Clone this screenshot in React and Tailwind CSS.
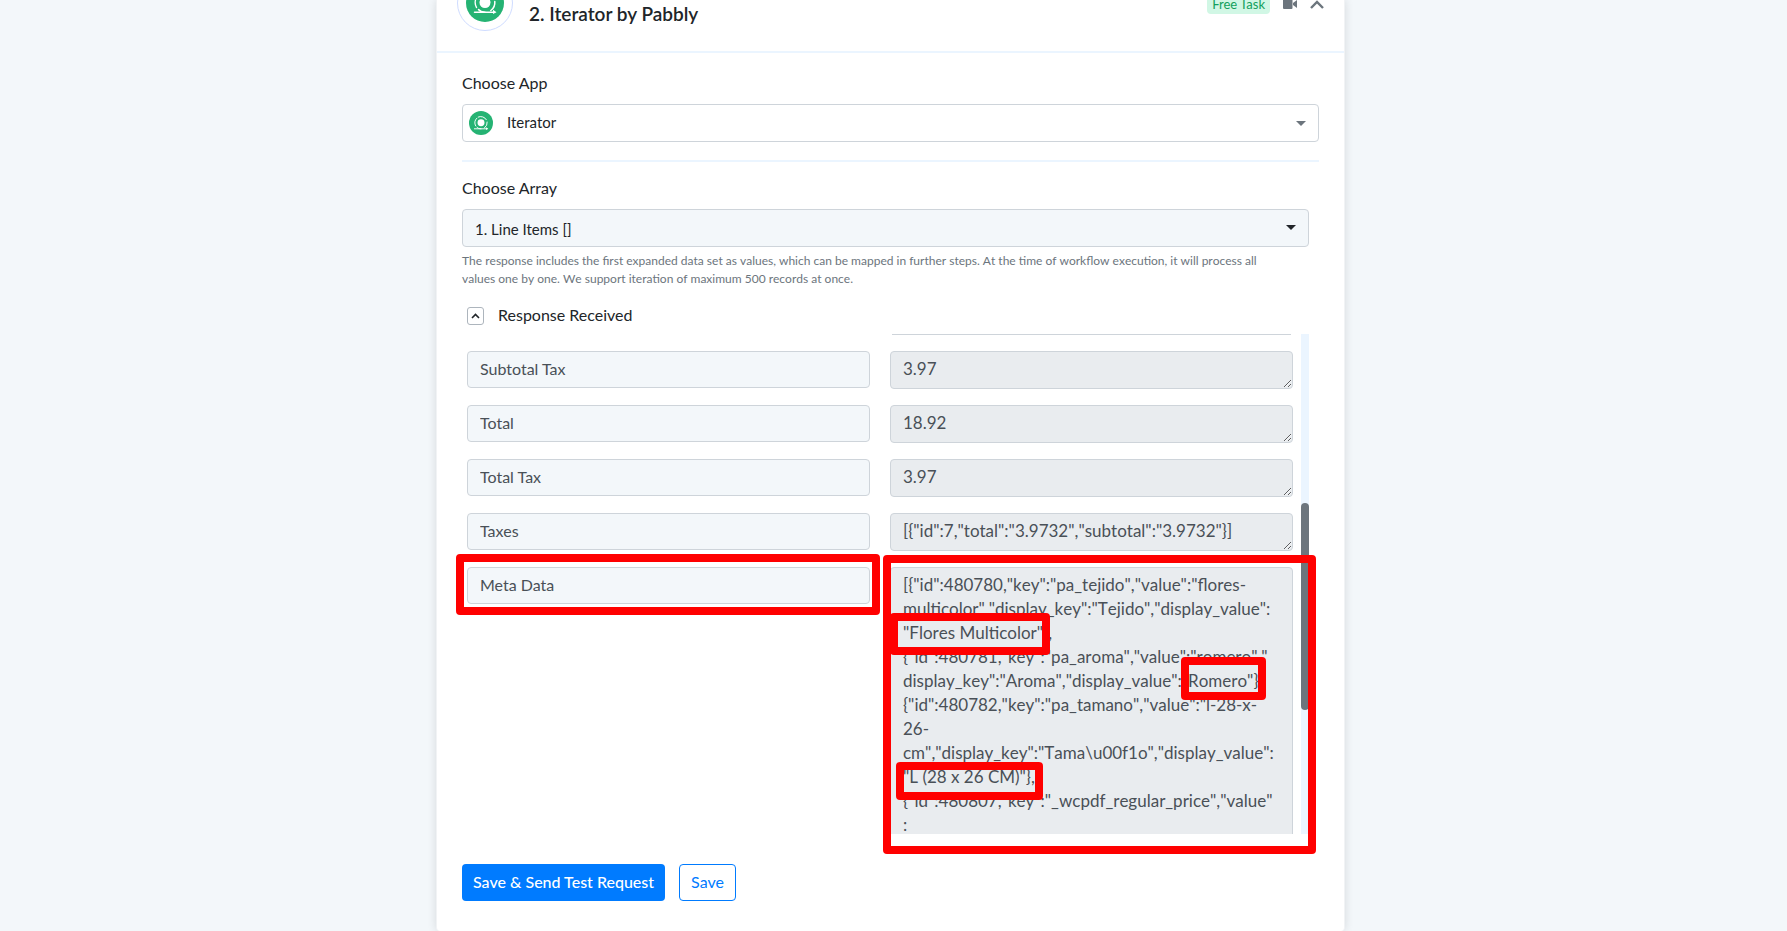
import { useState } from "react";

const fields = [
  { label: "Subtotal Tax", value: "3.97" },
  { label: "Total", value: "18.92" },
  { label: "Total Tax", value: "3.97" },
  { label: "Taxes", value: '[{"id":7,"total":"3.9732","subtotal":"3.9732"}]' },
];

const metaData = [
  '[{"id":480780,"key":"pa_tejido","value":"flores-',
  'multicolor","display_key":"Tejido","display_value":',
  '"Flores Multicolor"},',
  '{"id":480781,"key":"pa_aroma","value":"romero","',
  'display_key":"Aroma","display_value":"Romero"},',
  '{"id":480782,"key":"pa_tamano","value":"l-28-x-',
  "26-",
  'cm","display_key":"Tama\\u00f1o","display_value":',
  '"L (28 x 26 CM)"},',
  '{"id":480807,"key":"_wcpdf_regular_price","value"',
  ":",
].join("\n");

const IteratorLogo = ({ className }) => (
  <svg viewBox="0 0 38 38" className={className} aria-hidden="true">
    <circle cx="19" cy="19" r="19" fill="#25b373" />
    <circle cx="19" cy="18.5" r="5.5" fill="#fff" />
    <g fill="none" stroke="#fff" strokeWidth="1.5" strokeLinecap="round">
      <path d="M10.5 23.5a10 10 0 0 1 1.8-12" />
      <path d="M14.5 9.6a10 10 0 0 1 13 4.2" />
      <path d="M28.8 17.5a10 10 0 0 1-4 9" />
      <path d="M8.5 28.2h20" />
      <path d="M12.5 25.5c1.5 2 3.5 2.7 6.5 2.7" />
    </g>
    <path d="M27 25.8l3.5 2.4-3.5 1.8z" fill="#fff" />
  </svg>
);

const Caret = ({ className }) => (
  <svg viewBox="0 0 10 5" className={className} aria-hidden="true">
    <path d="M0 0h10L5 5z" fill="currentColor" />
  </svg>
);

const FieldRow = ({ id, label, value, tall }) => (
  <div className="grid grid-cols-2 items-start gap-5">
    <input
      id={id}
      aria-label={`${label} name`}
      readOnly
      value={label}
      className="h-[37px] w-full rounded border border-[#ced4da] bg-[#f3f7fa] px-3 pb-[2px] text-base text-[#495057]"
    />
    <textarea
      aria-labelledby={id}
      readOnly
      value={value}
      className={`block w-full overflow-hidden whitespace-pre rounded border border-[#ced4da] bg-[#e9ecef] px-3 py-[5px] text-[17px] leading-6 text-[#495057] [font-kerning:none] ${tall ? "h-[300px]" : "h-[38px]"}`}
    />
  </div>
);

const App = () => {
  const [open, setOpen] = useState(true);

  return (
    <div className="min-h-screen bg-[#f3f7fa] pr-[6px] font-['Lato',sans-serif] text-base text-[#212529]">
      <div className="mx-auto max-w-[909px] rounded-b border-x border-[#f1f3f5] bg-white shadow-[0_0_10px_rgba(0,0,0,0.12)]">
        {/* Step header */}
        <div className="flex h-[53px] items-start justify-between border-b-2 border-[#ebf5ff] px-5">
          <div className="flex items-start gap-4">
            <div className="-mt-[25px] flex h-14 w-14 items-center justify-center rounded-full border border-[#cfdcff]">
              <IteratorLogo className="h-[38px] w-[38px]" />
            </div>
            <h2 className="pt-[2px] text-[19px] font-semibold leading-6">2. Iterator by Pabbly</h2>
          </div>
          <div className="-mt-[6px] flex items-center gap-[13px]">
            <span className="rounded bg-[#d1f7e5] px-[5px] text-[13px] leading-5 text-[#12a05c]">Free Task</span>
            <button type="button" aria-label="Watch video" className="text-[#6c757d]">
              <svg viewBox="0 0 14 10" className="h-[10px] w-[14px]">
                <rect x="0" y="0" width="9.5" height="10" rx="1" fill="currentColor" />
                <path d="M10 4l4-3v8l-4-3z" fill="currentColor" />
              </svg>
            </button>
            <button type="button" aria-label="Collapse step" className="text-[#6c757d]">
              <svg viewBox="0 0 14 9" className="h-[9px] w-[14px]">
                <path d="M1 8l6-6 6 6" fill="none" stroke="currentColor" strokeWidth="2.4" />
              </svg>
            </button>
          </div>
        </div>

        <div className="px-[25px] pb-[30px] pt-[19px]">
          <label htmlFor="app" className="block leading-[22px]">Choose App</label>
          <div className="relative mt-[10px]">
            <select id="app" className="block h-[38px] w-full appearance-none rounded border border-[#ced4da] bg-white pb-[2px] pl-11 pr-8 text-[15px]">
              <option>Iterator</option>
            </select>
            <IteratorLogo className="pointer-events-none absolute left-[7px] top-[7px] h-6 w-6" />
            <Caret className="pointer-events-none absolute right-[13px] top-[17px] h-[5px] w-[10px] text-[#6c757d]" />
          </div>

          <hr className="mt-[18px] border-t-2 border-[#ebf5ff]" />

          <div className="pr-[10px]">
            <label htmlFor="array" className="mt-[15px] block leading-[22px]">Choose Array</label>
            <div className="relative mt-[10px]">
              <select id="array" className="block h-[38px] w-full appearance-none rounded border border-[#ced4da] bg-[#f3f7fa] pl-3 pr-8 pt-[2px] text-[15px]">
                <option>1. Line Items []</option>
              </select>
              <Caret className="pointer-events-none absolute right-[13px] top-4 h-[5px] w-[10px]" />
            </div>
            <p className="mt-[5px] text-xs leading-[18px] text-[#6c757d] [font-kerning:none]">
              The response includes the first expanded data set as values, which can be mapped in further steps. At the time of workflow execution, it will process all
              <br />
              values one by one. We support iteration of maximum 500 records at once.
            </p>

            <div className="mt-[17px] flex h-[22px] items-center gap-[14px] pl-[5px]">
              <button
                type="button"
                aria-label="Toggle response"
                aria-expanded={open}
                onClick={() => setOpen(!open)}
                className="flex h-[18px] w-[17px] items-center justify-center rounded-[3px] border border-[#adb5bd]"
              >
                <svg viewBox="0 0 9 6" className="h-[6px] w-[9px]">
                  <path d="M1 5l3.5-3.5L8 5" fill="none" stroke="currentColor" strokeWidth="1.6" />
                </svg>
              </button>
              <span className="pb-[2px]">Response Received</span>
            </div>

            {open && (
              <div className="relative mt-[7px]">
                <div className="flex h-[500px] justify-between overflow-hidden">
                  <div className="min-w-0 flex-1 pl-[5px] pr-2">
                    <div className="grid grid-cols-2 gap-5">
                      <span />
                      <span className="mx-[2px] h-px bg-[#ced4da]" />
                    </div>
                    <div className="mt-4 flex flex-col gap-4">
                      {fields.map((field, index) => (
                        <FieldRow key={field.label} id={`field-${index}`} label={field.label} value={field.value} />
                      ))}
                      <FieldRow id="field-meta" label="Meta Data" value={metaData} tall />
                    </div>
                  </div>
                  {/* Scrollbar */}
                  <div className="w-2 bg-[#ebf5ff] pt-[169px]">
                    <div className="h-[207px] rounded bg-[#6c757d]" />
                  </div>
                </div>

                {/* Highlights over the response */}
                <div className="pointer-events-none absolute -left-[6px] top-[220px] h-[61px] w-[424px] rounded border-8 border-[#ff0000]" />
                <div className="pointer-events-none absolute left-[421px] top-[221px] h-[299px] w-[433px] rounded border-8 border-[#ff0000]" />
                <div className="pointer-events-none absolute left-[428px] top-[279px] h-[42px] w-[160px] rounded border-8 border-[#ff0000]" />
                <div className="pointer-events-none absolute left-[719px] top-[323px] h-[43px] w-[85px] rounded border-8 border-[#ff0000]" />
                <div className="pointer-events-none absolute left-[434px] top-[428px] h-[38px] w-[147px] rounded border-8 border-[#ff0000]" />
              </div>
            )}

            <div className="mt-[30px] flex gap-[14px]">
              <button type="button" className="h-[37px] rounded bg-[#007bff] px-[11px] pb-[2px] font-medium text-white">
                Save &amp; Send Test Request
              </button>
              <button type="button" className="h-[37px] rounded border border-[#007bff] bg-white px-[11px] pb-[2px] text-[#007bff]">
                Save
              </button>
            </div>
          </div>
        </div>
      </div>
    </div>
  );
};

export default App;
